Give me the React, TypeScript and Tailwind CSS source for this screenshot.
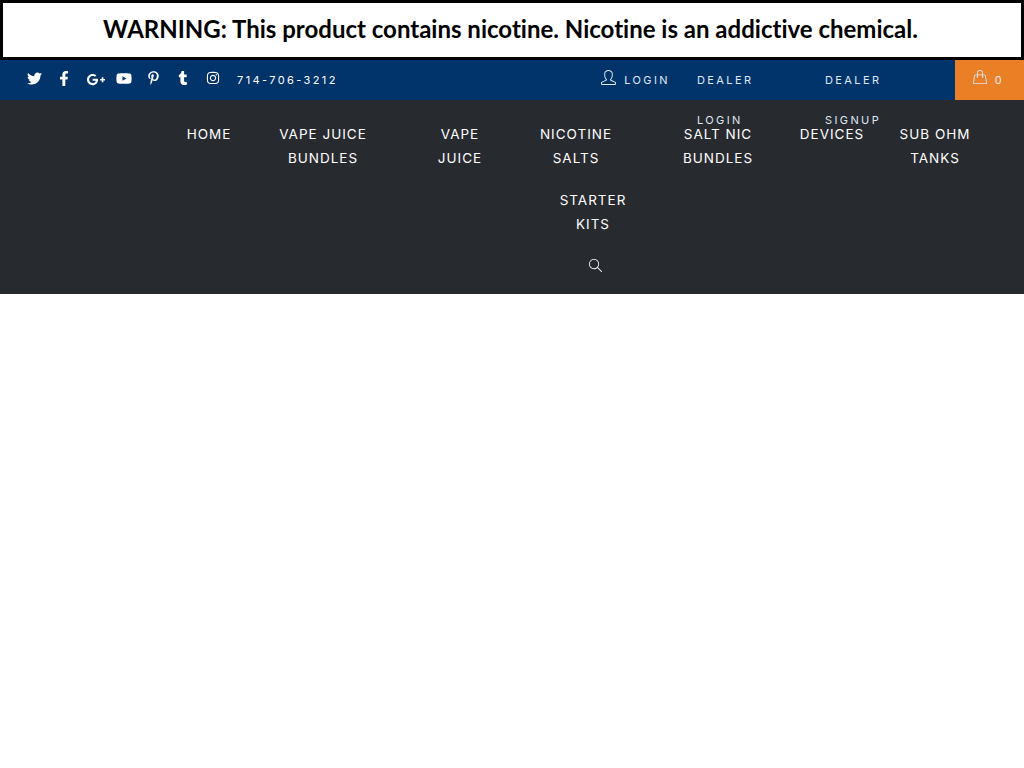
import React from 'react';
import { FaTwitter, FaFacebookF, FaGooglePlusG, FaYoutube, FaPinterestP, FaTumblr, FaInstagram } from 'react-icons/fa';
import { SlUser, SlHandbag, SlMagnifier } from 'react-icons/sl';

const menu = [
  { lines: ['HOME'], width: 'w-[78px]' },
  { lines: ['VAPE JUICE', 'BUNDLES'], width: 'w-[150px]' },
  { lines: ['VAPE', 'JUICE'], width: 'w-[124px]' },
  { lines: ['NICOTINE', 'SALTS'], width: 'w-[108px]' },
  { lines: ['SALT NIC', 'BUNDLES'], width: 'w-[176px]' },
  { lines: ['DEVICES'], width: 'w-[52px]' },
  { lines: ['SUB OHM', 'TANKS'], width: 'w-[154px]' },
];

const NavItem = ({ lines, width }: { lines: string[]; width: string }) => (
  <a className={`${width} shrink-0 flex flex-col items-center text-[13.5px] leading-6 tracking-[1px] text-white whitespace-nowrap`}>
    {lines.map((line) => (
      <div key={line}>{line}</div>
    ))}
  </a>
);

export default function App() {
  return (
    <div className="min-h-[768px] bg-white font-['Inter',sans-serif]">
      {/* Warning banner */}
      <div className="h-[60px] border-[3px] border-black bg-white flex items-center justify-center font-['Lato',sans-serif] font-bold text-[24px] text-black pb-[2px] pr-[3px] [font-variant-ligatures:none]">
        WARNING: This product contains nicotine. Nicotine is an addictive chemical.
      </div>

      {/* Top bar */}
      <div className="relative z-10 h-10 bg-[#00346a] flex text-[11px] leading-10 tracking-[2.4px] text-[#dfe9f3]">
        <div className="flex items-center pl-[27px] text-white">
          <FaTwitter className="w-[15px] h-[15px] mt-[-4px]" />
          <FaFacebookF className="w-[14px] h-[15px] ml-[15px] mt-[-4px]" />
          <FaGooglePlusG className="w-[20px] h-[15px] ml-[15px] mt-[-2px]" />
          <FaYoutube className="w-[16px] h-[15px] ml-[10px] mt-[-4px]" />
          <FaPinterestP className="w-[13px] h-[14px] ml-[15px] mt-[-4px]" />
          <FaTumblr className="w-[12px] h-[14px] ml-[17px] mt-[-4px]" />
          <FaInstagram className="w-[14px] h-[14px] ml-[17px] mt-[-4px]" />
          <span className="ml-[17px]">714-706-3212</span>
        </div>
        <div className="flex-1" />
        <a className="flex items-start">
          <SlUser className="w-[15px] h-[15px] mt-[10px] mr-[8px]" />
          LOGIN
        </a>
        <a className="w-[70px] ml-[27px]">DEALER LOGIN</a>
        <a className="w-[70px] ml-[58px] mr-[60px]">DEALER SIGNUP</a>
        <a className="w-[69px] bg-[#ea7f26] flex items-start justify-center pr-[2px]">
          <SlHandbag className="w-[14px] h-[14px] mt-[10px] mr-[8px]" />
          0
        </a>
      </div>

      {/* Main menu */}
      <nav className="h-[194px] bg-[#272a2f] pt-[22px]">
        <div className="flex pl-[170px]">
          {menu.map((item) => (
            <NavItem key={item.lines[0]} {...item} />
          ))}
        </div>
        <div className="flex justify-center pl-[162px] mt-[18px]">
          <NavItem lines={['STARTER', 'KITS']} width="w-[80px]" />
        </div>
        <div className="flex justify-center pl-[166px] mt-[23px] text-white">
          <SlMagnifier className="w-[13px] h-[13px]" />
        </div>
      </nav>
    </div>
  );
}
